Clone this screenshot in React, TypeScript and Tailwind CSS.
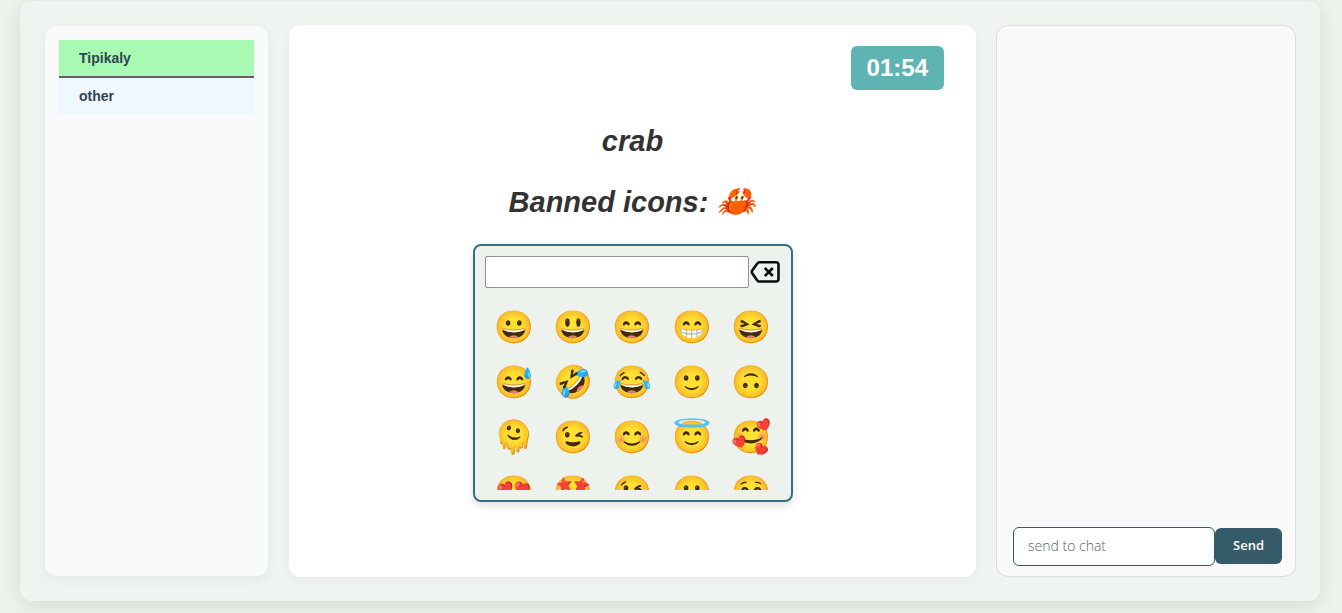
const players = [
  { name: "Tipikaly", active: true },
  { name: "other", active: false },
];

const emojis = [
  "😀", "😃", "😄", "😁", "😆",
  "😅", "🤣", "😂", "🙂", "🙃",
  "🫠", "😉", "😊", "😇", "🥰",
  "😍", "🤩", "😘", "😗", "😚",
];

function PlayerList() {
  return (
    <aside className="my-px mr-px w-[223px] shrink-0 rounded-xl bg-[#f9fbfa] p-3.5 shadow-[0_4px_12px_rgba(0,0,0,0.05)]">
      <ul>
        {players.map((player) => (
          <li
            key={player.name}
            className={
              player.active
                ? "h-[38px] border-b-2 border-[#5c625e] bg-[#a8fab2] px-5 text-sm leading-9 font-bold text-[#2f4550]"
                : "h-9 bg-[#f0f8ff] px-5 text-sm leading-9 font-bold text-[#2f4550]"
            }
          >
            {player.name}
          </li>
        ))}
      </ul>
    </aside>
  );
}

function BackspaceIcon() {
  return (
    <svg viewBox="0 0 32 32" className="size-8" fill="none" stroke="#0b0e0f" strokeWidth="2.6" strokeLinejoin="round" aria-hidden="true">
      <path d="M10.400 6.300h16.600a2.500 2.500 0 0 1 2.500 2.500v14.200a2.500 2.500 0 0 1-2.500 2.500H10.400a2.600 2.600 0 0 1-2.100-1.100l-4.900-6.900a2.700 2.700 0 0 1 0-3.200l4.900-6.900a2.600 2.600 0 0 1 2.100-1.100Z" />
      <path d="m15.800 12 8 8m0-8-8 8" />
    </svg>
  );
}

function EmojiPicker() {
  return (
    <section aria-label="Emoji picker" className="w-80 rounded-lg border-2 border-[#357080] bg-[#edf2ec] p-2.5 shadow-[0_4px_8px_rgba(0,0,0,0.12)]">
      <div className="flex">
        <input aria-label="Chosen icons" className="h-8 min-w-0 flex-1 rounded-xs border border-[#8f8f9d] bg-white px-1 outline-none" />
        <button type="button" aria-label="Delete last icon" className="size-8 shrink-0">
          <BackspaceIcon />
        </button>
      </div>
      <div className="mt-3 grid h-[190px] auto-rows-[55px] grid-cols-5 overflow-y-auto [scrollbar-width:none]">
        {emojis.map((emoji) => (
          <button key={emoji} type="button" className="text-[32px] leading-[55px]">
            {emoji}
          </button>
        ))}
      </div>
    </section>
  );
}

function Chat() {
  return (
    <aside className="flex w-[300px] shrink-0 flex-col justify-end rounded-xl border border-[#dcdcdc] bg-[#f9f9f9] pr-3 pb-2.5 pl-4">
      <form className="flex items-start font-['Open_Sans',sans-serif]">
        <input
          aria-label="Chat message"
          placeholder="send to chat"
          className="h-[39px] min-w-0 flex-1 rounded-md border border-[#355a69] bg-white px-3.5 pb-0.5 text-sm font-light outline-none placeholder:text-[#606060]"
        />
        <button type="button" className="mt-px mr-px h-9 w-[67px] rounded-md bg-[#355a69] text-[13px] font-semibold text-white">
          Send
        </button>
      </form>
    </aside>
  );
}

export default function App() {
  return (
    <div className="flex min-h-screen bg-[#edf2eb] pt-px pr-[22px] pb-3 pl-5 font-['Liberation_Sans',Arial,sans-serif]">
      <div className="flex flex-1 rounded-xl bg-[#eff4f0] py-6 pr-6 pl-[25px] shadow-[0_4px_20px_rgba(0,0,0,0.1)]">
        <div className="flex flex-1 gap-5">
          <PlayerList />
          <main className="flex min-w-0 flex-1 flex-col items-center rounded-xl bg-white px-8 pt-[21px] pb-6 shadow-[0_4px_12px_rgba(0,0,0,0.03)]">
            <div className="self-end rounded-md bg-[#5fb3b3] px-4 text-2xl leading-11 font-bold text-white">01:54</div>
            <h1 className="mt-[33px] text-[29px] leading-9 font-bold text-[#333333] italic">crab</h1>
            <h2 className="mt-[25px] mb-6 text-[29px] leading-9 font-bold text-[#333333] italic">
              Banned icons: <span className="text-[32px] leading-none">🦀</span>
            </h2>
            <EmojiPicker />
          </main>
          <Chat />
        </div>
      </div>
    </div>
  );
}
